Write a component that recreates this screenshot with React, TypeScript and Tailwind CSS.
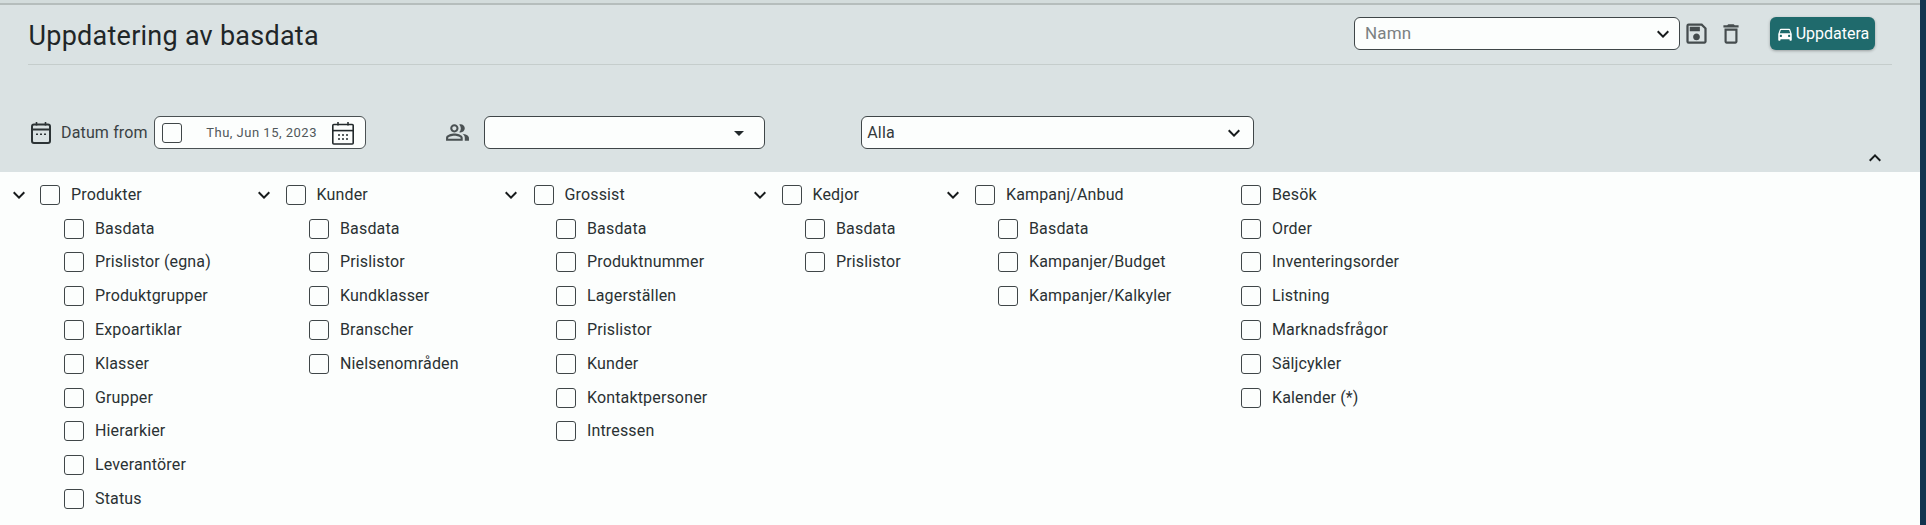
import React from "react";
import {
  MdOutlineSave,
  MdOutlineDelete,
  MdDirectionsCar,
  MdOutlinePeopleAlt,
  MdExpandMore,
  MdExpandLess,
  MdArrowDropDown,
} from "react-icons/md";

const Box = ({ className = "" }: { className?: string }) => (
  <span className={`block w-[20px] h-[20px] rounded-[3px] border-[1.5px] border-[#3f4648] bg-[#fcfefd] shrink-0 ${className}`} />
);

const CalendarLeft = () => (
  <svg width="22" height="24" viewBox="0 0 22 24" fill="none" className="text-[#2c3335] shrink-0">
    <rect x="2" y="3.5" width="18" height="18.5" rx="2" stroke="currentColor" strokeWidth="2" />
    <path d="M2 8.5H20" stroke="currentColor" strokeWidth="2" />
    <path d="M6.5 1V4.5M15.5 1V4.5" stroke="currentColor" strokeWidth="1.6" />
    <path d="M6 12.5h2v1.6H6zM10 12.5h2v1.6h-2zM14 12.5h2v1.6h-2z" fill="currentColor" />
  </svg>
);

const CalendarRight = () => (
  <svg width="22" height="24" viewBox="0 0 22 24" fill="none" className="text-[#22292b] shrink-0 ml-auto">
    <rect x="0.8" y="3.5" width="20.4" height="19.5" rx="1" stroke="currentColor" strokeWidth="1.6" />
    <path d="M0.8 9.6H21.2" stroke="currentColor" strokeWidth="1.6" />
    <path d="M6 1V4.5M16 1V4.5" stroke="currentColor" strokeWidth="1.5" />
    <path d="M6 13h2v2H6zM10 13h2v2h-2zM14 13h2v2h-2zM6 17h2v2H6zM10 17h2v2h-2zM14 17h2v2h-2z" fill="currentColor" opacity="0.75" />
  </svg>
);

type Col = { title: string; items: string[]; w: string; boxGap: string };

const columns: Col[] = [
  { title: "Produkter", w: "w-[245px]", boxGap: "ml-[9px]", items: ["Basdata", "Prislistor (egna)", "Produktgrupper", "Expoartiklar", "Klasser", "Grupper", "Hierarkier", "Leverantörer", "Status"] },
  { title: "Kunder", w: "w-[247px]", boxGap: "ml-[9.5px]", items: ["Basdata", "Prislistor", "Kundklasser", "Branscher", "Nielsenområden"] },
  { title: "Grossist", w: "w-[249px]", boxGap: "ml-[10.5px]", items: ["Basdata", "Produktnummer", "Lagerställen", "Prislistor", "Kunder", "Kontaktpersoner", "Intressen"] },
  { title: "Kedjor", w: "w-[193px]", boxGap: "ml-[9.5px]", items: ["Basdata", "Prislistor"] },
  { title: "Kampanj/Anbud", w: "w-[300px]", boxGap: "ml-[10px]", items: ["Basdata", "Kampanjer/Budget", "Kampanjer/Kalkyler"] },
];

const plain = ["Besök", "Order", "Inventeringsorder", "Listning", "Marknadsfrågor", "Säljcykler", "Kalender (*)"];

const Row = ({ label, indent = true }: { label: string; indent?: boolean }) => (
  <div className={`flex items-center h-[33.8px] ${indent ? "pl-[57px]" : ""}`}>
    <Box />
    <span className="ml-[11px] whitespace-nowrap">{label}</span>
  </div>
);

export default function App() {
  return (
    <div className="flex w-[1926px] h-[525px] overflow-hidden bg-[#fcfefd] text-[16px] tracking-[0.15px] text-[#2a3133] font-['Roboto',sans-serif]">
      <div className="flex-1 min-w-0 flex flex-col">
        <div className="h-[172px] bg-[#dae2e3] flex flex-col">
          <div className="h-[5px] bg-[#d3dcdc] border-b-[2px] border-[#b5bdbc] shrink-0" />
          <div className="mx-[28px] h-[60px] border-b-[1.5px] border-[#c5cdcc] flex items-start shrink-0">
            <h1 className="text-[27px] leading-[34px] mt-[14px] ml-[0.5px] tracking-[0.25px] font-normal text-[#1f2628]">Uppdatering av basdata</h1>
            <div className="ml-auto flex items-center mt-[12px] mr-[17px]">
              <div className="w-[326px] h-[33px] rounded-[6px] border-[1.5px] border-[#3f4648] bg-[#fcfefd] flex items-center justify-between pl-[10px] pr-[4px]">
                <span className="text-[#7b8182] text-[17px]">Namn</span>
                <MdExpandMore className="text-[#171b1c]" size={24} />
              </div>
              <MdOutlineSave className="ml-[3px] text-[#454c4e]" size={27} />
              <MdOutlineDelete className="ml-[8px] text-[#454c4e]" size={26} />
              <button className="ml-[26px] w-[105px] h-[33px] rounded-[6px] bg-[#1f6a6c] text-white text-[16px] tracking-normal flex items-center justify-center gap-[2px] shadow-[0_1px_3px_rgba(0,0,0,0.3)]">
                <MdDirectionsCar size={18} />
                <span>Uppdatera</span>
              </button>
            </div>
          </div>
          <div className="flex items-center mt-[51px] pl-[30px] shrink-0 relative">
            <CalendarLeft />
            <span className="ml-[9px] text-[#3a4143] whitespace-nowrap">Datum from</span>
            <div className="ml-[6.5px] w-[212px] h-[33px] rounded-[6px] border-[1.5px] border-[#4a5153] bg-[#fcfefd] flex items-center pl-[7px] pr-[11px]">
              <Box />
              <span className="ml-[24px] text-[13px] tracking-[0.5px] text-[#50575a] whitespace-nowrap">Thu, Jun 15, 2023</span>
              <CalendarRight />
            </div>
            <MdOutlinePeopleAlt className="ml-[79px] text-[#4a5153]" size={25} />
            <div className="ml-[14px] w-[281px] h-[33px] rounded-[6px] border-[1.5px] border-[#3f4648] bg-[#fcfefd] flex items-center justify-end pr-[13px]">
              <MdArrowDropDown className="text-[#22292b]" size={24} />
            </div>
            <div className="ml-[96px] w-[393px] h-[33px] rounded-[6px] border-[1.5px] border-[#3f4648] bg-[#fcfefd] flex items-center justify-between pl-[5px] pr-[7px]">
              <span className="text-[#33393b]">Alla</span>
              <MdExpandMore className="text-[#171b1c]" size={24} />
            </div>
            <MdExpandLess className="absolute left-[1863px] top-[30px] text-[#171b1c]" size={24} />
          </div>
        </div>
        <div className="flex pl-[7px] pt-[6px]">
          {columns.map((c) => (
            <div key={c.title} className={`${c.w} shrink-0`}>
              <div className="flex items-center h-[33.8px]">
                <MdExpandMore className="text-[#171b1c]" size={24} />
                <Box className={c.boxGap} />
                <span className="ml-[11px] whitespace-nowrap">{c.title}</span>
              </div>
              {c.items.map((i) => (
                <Row key={i} label={i} />
              ))}
            </div>
          ))}
          <div>
            {plain.map((p) => (
              <Row key={p} label={p} indent={false} />
            ))}
          </div>
        </div>
      </div>
      <div className="w-[6px] shrink-0 bg-[#12344f]" />
    </div>
  );
}
